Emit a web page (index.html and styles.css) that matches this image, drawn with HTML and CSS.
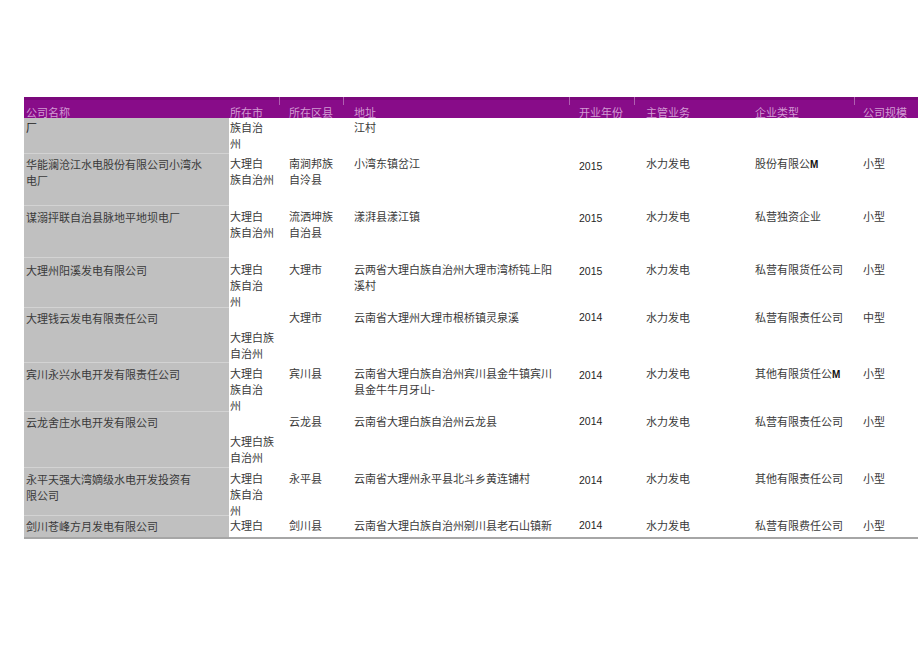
FILE: index.html
```html
<!DOCTYPE html>
<html lang="zh-CN">
<head>
<meta charset="utf-8">
<title>公司名录</title>
<link rel="stylesheet" href="styles.css">
</head>
<body>
<div class="page">
  <div class="table">
    <div class="row head">
      <div class="c name">公司名称</div>
      <div class="c city">所在市</div>
      <div class="c dist tick">所在区县</div>
      <div class="c addr tick">地址</div>
      <div class="c year tick">开业年份</div>
      <div class="c biz tick">主管业务</div>
      <div class="c type">企业类型</div>
      <div class="c scale tick">公司规模</div>
    </div>

    <div class="row r0">
      <div class="c name"><span class="mark">厂</span></div>
      <div class="c city">族自治<br>州</div>
      <div class="c dist"></div>
      <div class="c addr">江村</div>
      <div class="c year"></div>
      <div class="c biz"></div>
      <div class="c type"></div>
      <div class="c scale"></div>
    </div>

    <div class="row r1">
      <div class="c name">华能澜沧江水电股份有限公司小湾水<br>电厂</div>
      <div class="c city">大理白<br>族自治州</div>
      <div class="c dist">南涧邦族<br>自泠县</div>
      <div class="c addr">小湾东镇岔江</div>
      <div class="c year"><span class="num low">2015</span></div>
      <div class="c biz">水力发电</div>
      <div class="c type">股份有限公<b class="m">M</b></div>
      <div class="c scale">小型</div>
    </div>

    <div class="row r2">
      <div class="c name">谋溺抨联自治县脉地平地坝电厂</div>
      <div class="c city">大理白<br>族自治州</div>
      <div class="c dist">流洒坤族<br>自治县</div>
      <div class="c addr">漾湃县漾江镇</div>
      <div class="c year"><span class="num">2015</span></div>
      <div class="c biz">水力发电</div>
      <div class="c type">私营独资企业</div>
      <div class="c scale">小型</div>
    </div>

    <div class="row r3">
      <div class="c name">大理州阳溪发电有限公司</div>
      <div class="c city">大理白<br>族自治<br>州</div>
      <div class="c dist">大理市</div>
      <div class="c addr">云两省大理白族自治州大理市湾桥钝上阳<br>溪村</div>
      <div class="c year"><span class="num">2015</span></div>
      <div class="c biz">水力发电</div>
      <div class="c type">私营有限货任公司</div>
      <div class="c scale">小型</div>
    </div>

    <div class="row r4">
      <div class="c name">大理钱云发电有限责任公司</div>
      <div class="c city drop">大理白族<br>自治州</div>
      <div class="c dist">大理市</div>
      <div class="c addr">云南省大理州大理市根桥镇灵泉溪</div>
      <div class="c year"><span class="num up">2014</span></div>
      <div class="c biz">水力发电</div>
      <div class="c type">私营有限责任公司</div>
      <div class="c scale">中型</div>
    </div>

    <div class="row r5">
      <div class="c name">宾川永兴水电开发有限责任公司</div>
      <div class="c city">大理白<br>族自治<br>州</div>
      <div class="c dist">宾川县</div>
      <div class="c addr">云南省大理白族自治州宾川县金牛镇宾川<br>县金牛牛月牙山-</div>
      <div class="c year"><span class="num">2014</span></div>
      <div class="c biz">水力发电</div>
      <div class="c type">其他有限货任公<b class="m">M</b></div>
      <div class="c scale">小型</div>
    </div>

    <div class="row r6">
      <div class="c name">云龙舍庄水电开发有限公司</div>
      <div class="c city drop">大理白族<br>自治州</div>
      <div class="c dist">云龙县</div>
      <div class="c addr">云南省大理白族自治州云龙县</div>
      <div class="c year"><span class="num up">2014</span></div>
      <div class="c biz">水力发电</div>
      <div class="c type">私营有限责任公司</div>
      <div class="c scale">小型</div>
    </div>

    <div class="row r7">
      <div class="c name">永平天强大湾嫡级水电开发投资有<br>限公司</div>
      <div class="c city">大理白<br>族自治<br>州</div>
      <div class="c dist">永平县</div>
      <div class="c addr">云南省大理州永平县北斗乡黄连铺村</div>
      <div class="c year"><span class="num">2014</span></div>
      <div class="c biz">水力发电</div>
      <div class="c type">其他有限责任公司</div>
      <div class="c scale">小型</div>
    </div>

    <div class="row r8">
      <div class="c name">剑川苍峰方月发电有限公司</div>
      <div class="c city">大理白</div>
      <div class="c dist">剑川县</div>
      <div class="c addr">云南省大理白族自治州剜川县老石山镇新</div>
      <div class="c year"><span class="num up">2014</span></div>
      <div class="c biz">水力发电</div>
      <div class="c type">私营有限费任公司</div>
      <div class="c scale">小型</div>
    </div>
  </div>
</div>
</body>
</html>
```

FILE: styles.css
```css
html, body {
  margin: 0;
  padding: 0;
  background: #ffffff;
}

.page {
  padding: 97px 0 0 24px;
  width: 894px;
  font-family: "Noto Sans CJK SC", "Noto Sans", sans-serif;
  font-size: 11px;
  line-height: 16px;
  color: #3a3a3a;
}

.table {
  width: 894px;
  border-bottom: 2px solid #a6a6a6;
}

.row {
  display: grid;
  grid-template-columns: 205px 50px 64px 226px 65px 111px 109px 64px;
}

.c {
  white-space: nowrap;
  padding-top: var(--pt, 2px);
  box-sizing: border-box;
  overflow: visible;
}

.name  { padding-left: 2px; background: #c0c0c0; border-top: 1px solid #d3d3d3; }
.city  { padding-left: 1px; }
.dist  { padding-left: 10px; }
.addr  { padding-left: 11px; }
.year  { padding-left: 10px; }
.biz   { padding-left: 12px; }
.type  { padding-left: 10px; }
.scale { padding-left: 9px; }

.head {
  height: 21px;
  background: #880c89;
  color: #d29bd3;
  line-height: 14px;
  box-shadow: inset 0 3px 0 #7a087b;
}

.head .c {
  padding-top: 8px;
}

.head .name {
  background: transparent;
  border-top: none;
}

.head .tick {
  background: linear-gradient(#b060b1, #b060b1) left top / 1px 8px no-repeat;
}

.r0 { height: 35px; --pt: 1px; }
.r0 .name { border-top: none; }
.r1 { height: 52px; --pt: 2px; }
.r2 { height: 52px; --pt: 3px; }
.r3 { height: 50px; --pt: 4px; }
.r4 { height: 55px; --pt: 2px; }
.r5 { height: 49px; --pt: 3px; }
.r6 { height: 56px; --pt: 2px; }
.r7 { height: 48px; --pt: 3px; }
.r8 { height: 22px; --pt: 2px; }

.drop { padding-top: 22px; }

.num {
  font-family: "Liberation Sans", Arial, sans-serif;
  font-size: 10.5px;
  color: #1f1f1f;
  position: relative;
  top: 1px;
}

.num.low { top: 2px; }
.num.up { top: -1px; }

.m {
  font-family: "Liberation Sans", Arial, sans-serif;
  font-weight: bold;
  font-size: 10px;
  color: #111;
}

.mark {
  color: #222;
}
```
